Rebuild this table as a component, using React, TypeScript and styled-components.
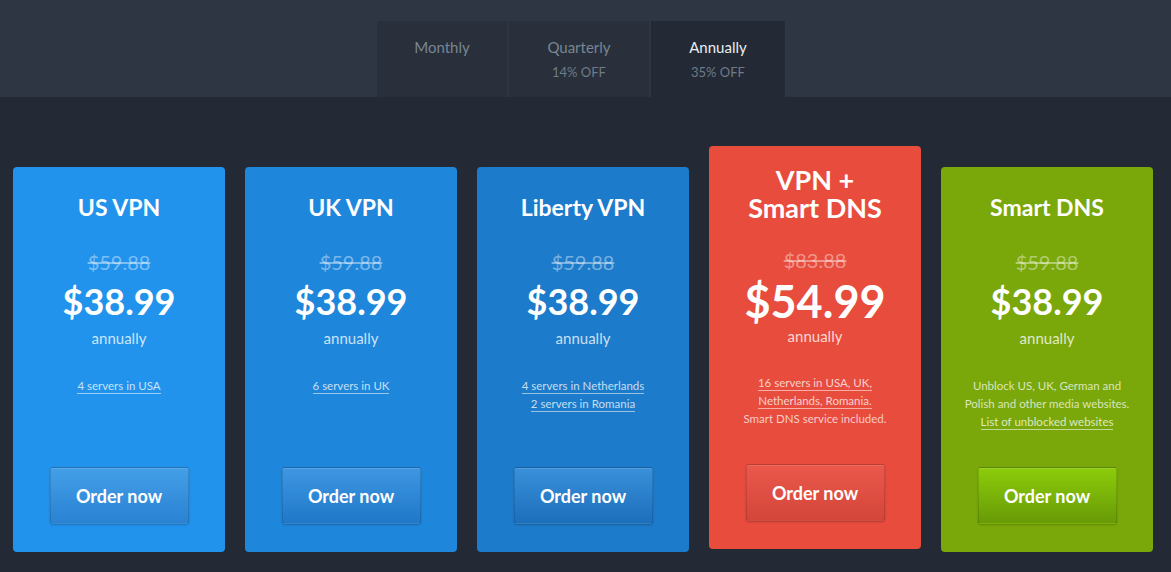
import React from "react";
import styled, { createGlobalStyle, css } from "styled-components";

const GlobalStyle = createGlobalStyle`
  html, body {
    margin: 0;
    padding: 0;
    background: #242a35;
    font-family: Lato, "Open Sans", sans-serif;
    -webkit-font-smoothing: antialiased;
  }
`;

type Tone = "blue" | "mid" | "deep" | "red" | "green";

const tones: Record<Tone, { bg: string; top: string; bottom: string }> = {
  blue: { bg: "#2193ec", top: "#449fe8", bottom: "#2a82d3" },
  mid: { bg: "#1e86db", top: "#3f97e2", bottom: "#1f78c8" },
  deep: { bg: "#1c7bca", top: "#3a90da", bottom: "#1c6fbb" },
  red: { bg: "#e74c3c", top: "#ea584b", bottom: "#d4463a" },
  green: { bg: "#7aa80a", top: "#8ccc0a", bottom: "#689a07" },
};

type Plan = {
  name: string[];
  oldPrice: string;
  price: string;
  tone: Tone;
  featured?: boolean;
  links?: string[];
  text?: string[];
  trailingLink?: string;
};

const plans: Plan[] = [
  { name: ["US VPN"], oldPrice: "$59.88", price: "$38.99", tone: "blue", links: ["4 servers in USA"] },
  { name: ["UK VPN"], oldPrice: "$59.88", price: "$38.99", tone: "mid", links: ["6 servers in UK"] },
  {
    name: ["Liberty VPN"],
    oldPrice: "$59.88",
    price: "$38.99",
    tone: "deep",
    links: ["4 servers in Netherlands", "2 servers in Romania"],
  },
  {
    name: ["VPN +", "Smart DNS"],
    oldPrice: "$83.88",
    price: "$54.99",
    tone: "red",
    featured: true,
    links: ["16 servers in USA, UK,", "Netherlands, Romania."],
    text: ["Smart DNS service included."],
  },
  {
    name: ["Smart DNS"],
    oldPrice: "$59.88",
    price: "$38.99",
    tone: "green",
    text: ["Unblock US, UK, German and", "Polish and other media websites."],
    trailingLink: "List of unblocked websites",
  },
];

const periods = [
  { label: "Monthly", off: "", width: 130 },
  { label: "Quarterly", off: "14% OFF", width: 140 },
  { label: "Annually", off: "35% OFF", width: 134 },
];

export default function App() {
  const active = 2;
  return (
    <>
      <GlobalStyle />
      <Page>
        <TopBand>
          <Tabs>
            {periods.map((p, i) => (
              <Tab key={p.label} $active={i === active} $w={p.width}>
                <TabLabel $active={i === active}>{p.label}</TabLabel>
                {p.off && <TabOff>{p.off}</TabOff>}
              </Tab>
            ))}
          </Tabs>
        </TopBand>
        <Cards>
          {plans.map((p) => (
            <Card key={p.name.join(" ")} $tone={p.tone} $featured={p.featured}>
              <Title $featured={p.featured}>
                {p.name.map((n) => (
                  <div key={n}>{n}</div>
                ))}
              </Title>
              <OldPrice $featured={p.featured}>{p.oldPrice}</OldPrice>
              <Price $featured={p.featured}>{p.price}</Price>
              <Period $featured={p.featured}>annually</Period>
              <Details $featured={p.featured}>
                {p.links?.map((l) => (
                  <Line key={l}>
                    <Link href="#">{l}</Link>
                  </Line>
                ))}
                {p.text?.map((t) => (
                  <Line key={t}>{t}</Line>
                ))}
                {p.trailingLink && (
                  <Line>
                    <Link href="#">{p.trailingLink}</Link>
                  </Line>
                )}
              </Details>
              <OrderButton $tone={p.tone}>Order now</OrderButton>
            </Card>
          ))}
        </Cards>
      </Page>
    </>
  );
}

const Page = styled.div`
  width: 1171px;
  min-height: 572px;
  background: #242a35;
`;

const TopBand = styled.div`
  background: #2e3644;
  height: 97px;
  display: flex;
  align-items: flex-end;
  padding-left: 377px;
  box-sizing: border-box;
`;

const Tabs = styled.div`
  display: flex;
  gap: 2px;
  height: 76px;
`;

const Tab = styled.div<{ $active?: boolean; $w: number }>`
  width: ${(p) => p.$w}px;
  background: ${(p) => (p.$active ? "#242a35" : "#29303b")};
  display: flex;
  flex-direction: column;
  align-items: center;
  padding-top: 17px;
  box-sizing: border-box;
  gap: 7px;
  cursor: pointer;
`;

const TabLabel = styled.span<{ $active?: boolean }>`
  font-size: 15px;
  line-height: 18px;
  color: ${(p) => (p.$active ? "#e9edf1" : "#788593")};
`;

const TabOff = styled.span`
  font-size: 13px;
  line-height: 18px;
  color: #6e7a88;
`;

const Cards = styled.div`
  display: flex;
  gap: 20px;
  padding: 70px 0 0 13px;
  align-items: flex-start;
`;

const Card = styled.div<{ $tone: Tone; $featured?: boolean }>`
  width: 212px;
  height: 385px;
  box-sizing: border-box;
  border-radius: 4px;
  background: ${(p) => tones[p.$tone].bg};
  color: #fff;
  display: flex;
  flex-direction: column;
  align-items: center;
  text-align: center;
  padding: 27px 0 28px;

  ${(p) =>
    p.$featured &&
    css`
      margin-top: -21px;
      height: 403px;
      padding: 20px 0 28px;
    `}
`;

const Title = styled.div<{ $featured?: boolean }>`
  font-weight: 700;
  font-size: ${(p) => (p.$featured ? "27px" : "23px")};
  line-height: ${(p) => (p.$featured ? "28px" : "26px")};
`;

const OldPrice = styled.div<{ $featured?: boolean }>`
  margin-top: ${(p) => (p.$featured ? "26px" : "30px")};
  font-size: 20px;
  line-height: 24px;
  color: rgba(255, 255, 255, 0.42);
  text-decoration: line-through;
`;

const Price = styled.div<{ $featured?: boolean }>`
  font-weight: 700;
  font-size: ${(p) => (p.$featured ? "45px" : "36px")};
  line-height: ${(p) => (p.$featured ? "48px" : "40px")};
  margin-top: ${(p) => (p.$featured ? "5px" : "7px")};
`;

const Period = styled.div<{ $featured?: boolean }>`
  font-size: 15px;
  line-height: 18px;
  margin-top: ${(p) => (p.$featured ? "2px" : "8px")};
  color: rgba(255, 255, 255, 0.78);
`;

const Details = styled.div<{ $featured?: boolean }>`
  margin-top: ${(p) => (p.$featured ? "29px" : "30px")};
  font-size: 11.5px;
  line-height: 18px;
  color: rgba(255, 255, 255, 0.72);
`;

const Line = styled.div`
  white-space: nowrap;
`;

const Link = styled.a`
  color: rgba(255, 255, 255, 0.75);
  text-decoration: none;
  border-bottom: 1px solid rgba(255, 255, 255, 0.55);
  padding-bottom: 1px;
`;

const OrderButton = styled.button<{ $tone: Tone }>`
  margin-top: auto;
  width: 139px;
  height: 57px;
  border-radius: 3px;
  border: 1px solid rgba(0, 0, 0, 0.12);
  background: linear-gradient(
    to bottom,
    ${(p) => tones[p.$tone].top},
    ${(p) => tones[p.$tone].bottom}
  );
  box-shadow: 0 1px 2px rgba(0, 0, 0, 0.22), inset 0 1px 0 rgba(255, 255, 255, 0.12);
  color: #fff;
  font-family: Lato, sans-serif;
  font-weight: 700;
  font-size: 18px;
  cursor: pointer;
`;
